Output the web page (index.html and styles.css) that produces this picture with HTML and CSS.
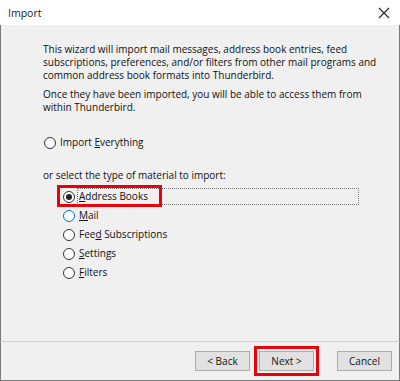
FILE: index.html
```html
<!DOCTYPE html>
<html lang="en">
<head>
    <meta charset="UTF-8">
    <title>Import</title>
    <link rel="stylesheet" href="styles.css">
</head>
<body>
    <div class="dialog">
        <div class="titlebar">
            <span class="title">Import</span>
            <svg class="close" width="12" height="12" viewBox="0 0 12 12">
                <path d="M1 1 L11 11 M11 1 L1 11" stroke="#222" stroke-width="1.1" fill="none"/>
            </svg>
        </div>

        <div class="content">
            <p class="intro">This wizard will import mail messages, address book entries, feed subscriptions, preferences, and/or filters from other mail programs and common address book formats into Thunderbird.</p>
            <p class="intro">Once they have been imported, you will be able to access them from within Thunderbird.</p>

            <label class="radio-row everything">
                <span class="radio"></span>
                <span class="label">Import <u>E</u>verything</span>
            </label>

            <p class="select-text">or select the type of material to import:</p>

            <div class="radio-list">
                <label class="radio-row">
                    <span class="highlight"></span>
                    <span class="radio checked"></span>
                    <span class="label focused"><u>A</u>ddress Books</span>
                </label>
                <label class="radio-row">
                    <span class="radio hover"></span>
                    <span class="label"><u>M</u>ail</span>
                </label>
                <label class="radio-row">
                    <span class="radio"></span>
                    <span class="label">Fee<u>d</u> Subscriptions</span>
                </label>
                <label class="radio-row">
                    <span class="radio"></span>
                    <span class="label"><u>S</u>ettings</span>
                </label>
                <label class="radio-row">
                    <span class="radio"></span>
                    <span class="label"><u>F</u>ilters</span>
                </label>
            </div>
        </div>

        <div class="footer">
            <button type="button" class="btn">&lt; Back</button>
            <button type="button" class="btn next">Next &gt;</button>
            <button type="button" class="btn cancel">Cancel</button>
        </div>
    </div>
</body>
</html>
```

FILE: styles.css
```css
html, body {
    margin: 0;
    padding: 0;
}
body {
    font-family: "Open Sans", "Noto Sans", sans-serif;
    font-size: 10px;
    color: #111;
    background: #fff;
}
.dialog {
    width: 400px;
    height: 381px;
    display: flex;
    flex-direction: column;
    box-sizing: border-box;
}
.titlebar {
    height: 25px;
    display: flex;
    align-items: center;
    justify-content: space-between;
    background: #fff;
    padding: 0 8px 0 8px;
    flex-shrink: 0;
}
.title {
    font-size: 10.5px;
    color: #1a1a1a;
}
.close {
    margin-right: 2px;
}
.content {
    flex: 1;
    background: #f0f0f0;
    border-left: 1px solid #7a7a7a;
    border-right: 1px solid #7a7a7a;
    padding: 18px 20px 0 42px;
}
.intro {
    margin: 0 0 6px 0;
    line-height: 13px;
}
.radio-row {
    display: flex;
    align-items: center;
    height: 19px;
    position: relative;
}
.everything {
    margin-top: 19px;
    margin-left: 1px;
}
.select-text {
    margin: 17px 0 5px 0;
    line-height: 13px;
}
.radio-list {
    margin-left: 20px;
}
.radio {
    width: 10px;
    height: 10px;
    border: 1px solid #333;
    border-radius: 50%;
    background: #fff;
    box-sizing: content-box;
    display: flex;
    align-items: center;
    justify-content: center;
    flex-shrink: 0;
}
.radio.hover {
    border-color: #0078d7;
}
.radio.checked::after {
    content: "";
    width: 6px;
    height: 6px;
    border-radius: 50%;
    background: #222;
}
.label {
    margin-left: 2px;
    padding: 1px 1px 1px 1px;
    border: 1px dotted transparent;
    line-height: 13px;
}
.label.focused {
    border-color: #777;
    width: 278px;
}
.highlight {
    position: absolute;
    left: -6px;
    top: -2px;
    width: 99px;
    height: 16px;
    border: 3px solid #e8000b;
}
.footer {
    height: 38px;
    flex-shrink: 0;
    background: #f0f0f0;
    border: 1px solid #7a7a7a;
    border-top: 1px solid #d2d2d2;
    display: flex;
    align-items: center;
    justify-content: flex-end;
    padding: 0 7px 0 0;
}
.btn {
    width: 55px;
    height: 20px;
    font-family: inherit;
    font-size: 10px;
    color: #111;
    background: #e1e1e1;
    border: 1px solid #adadad;
    padding: 0;
    margin-left: 9px;
}
.btn.next {
    outline: 3px solid #e8000b;
    outline-offset: 2px;
}
.btn.cancel {
    margin-left: 23px;
}
```
